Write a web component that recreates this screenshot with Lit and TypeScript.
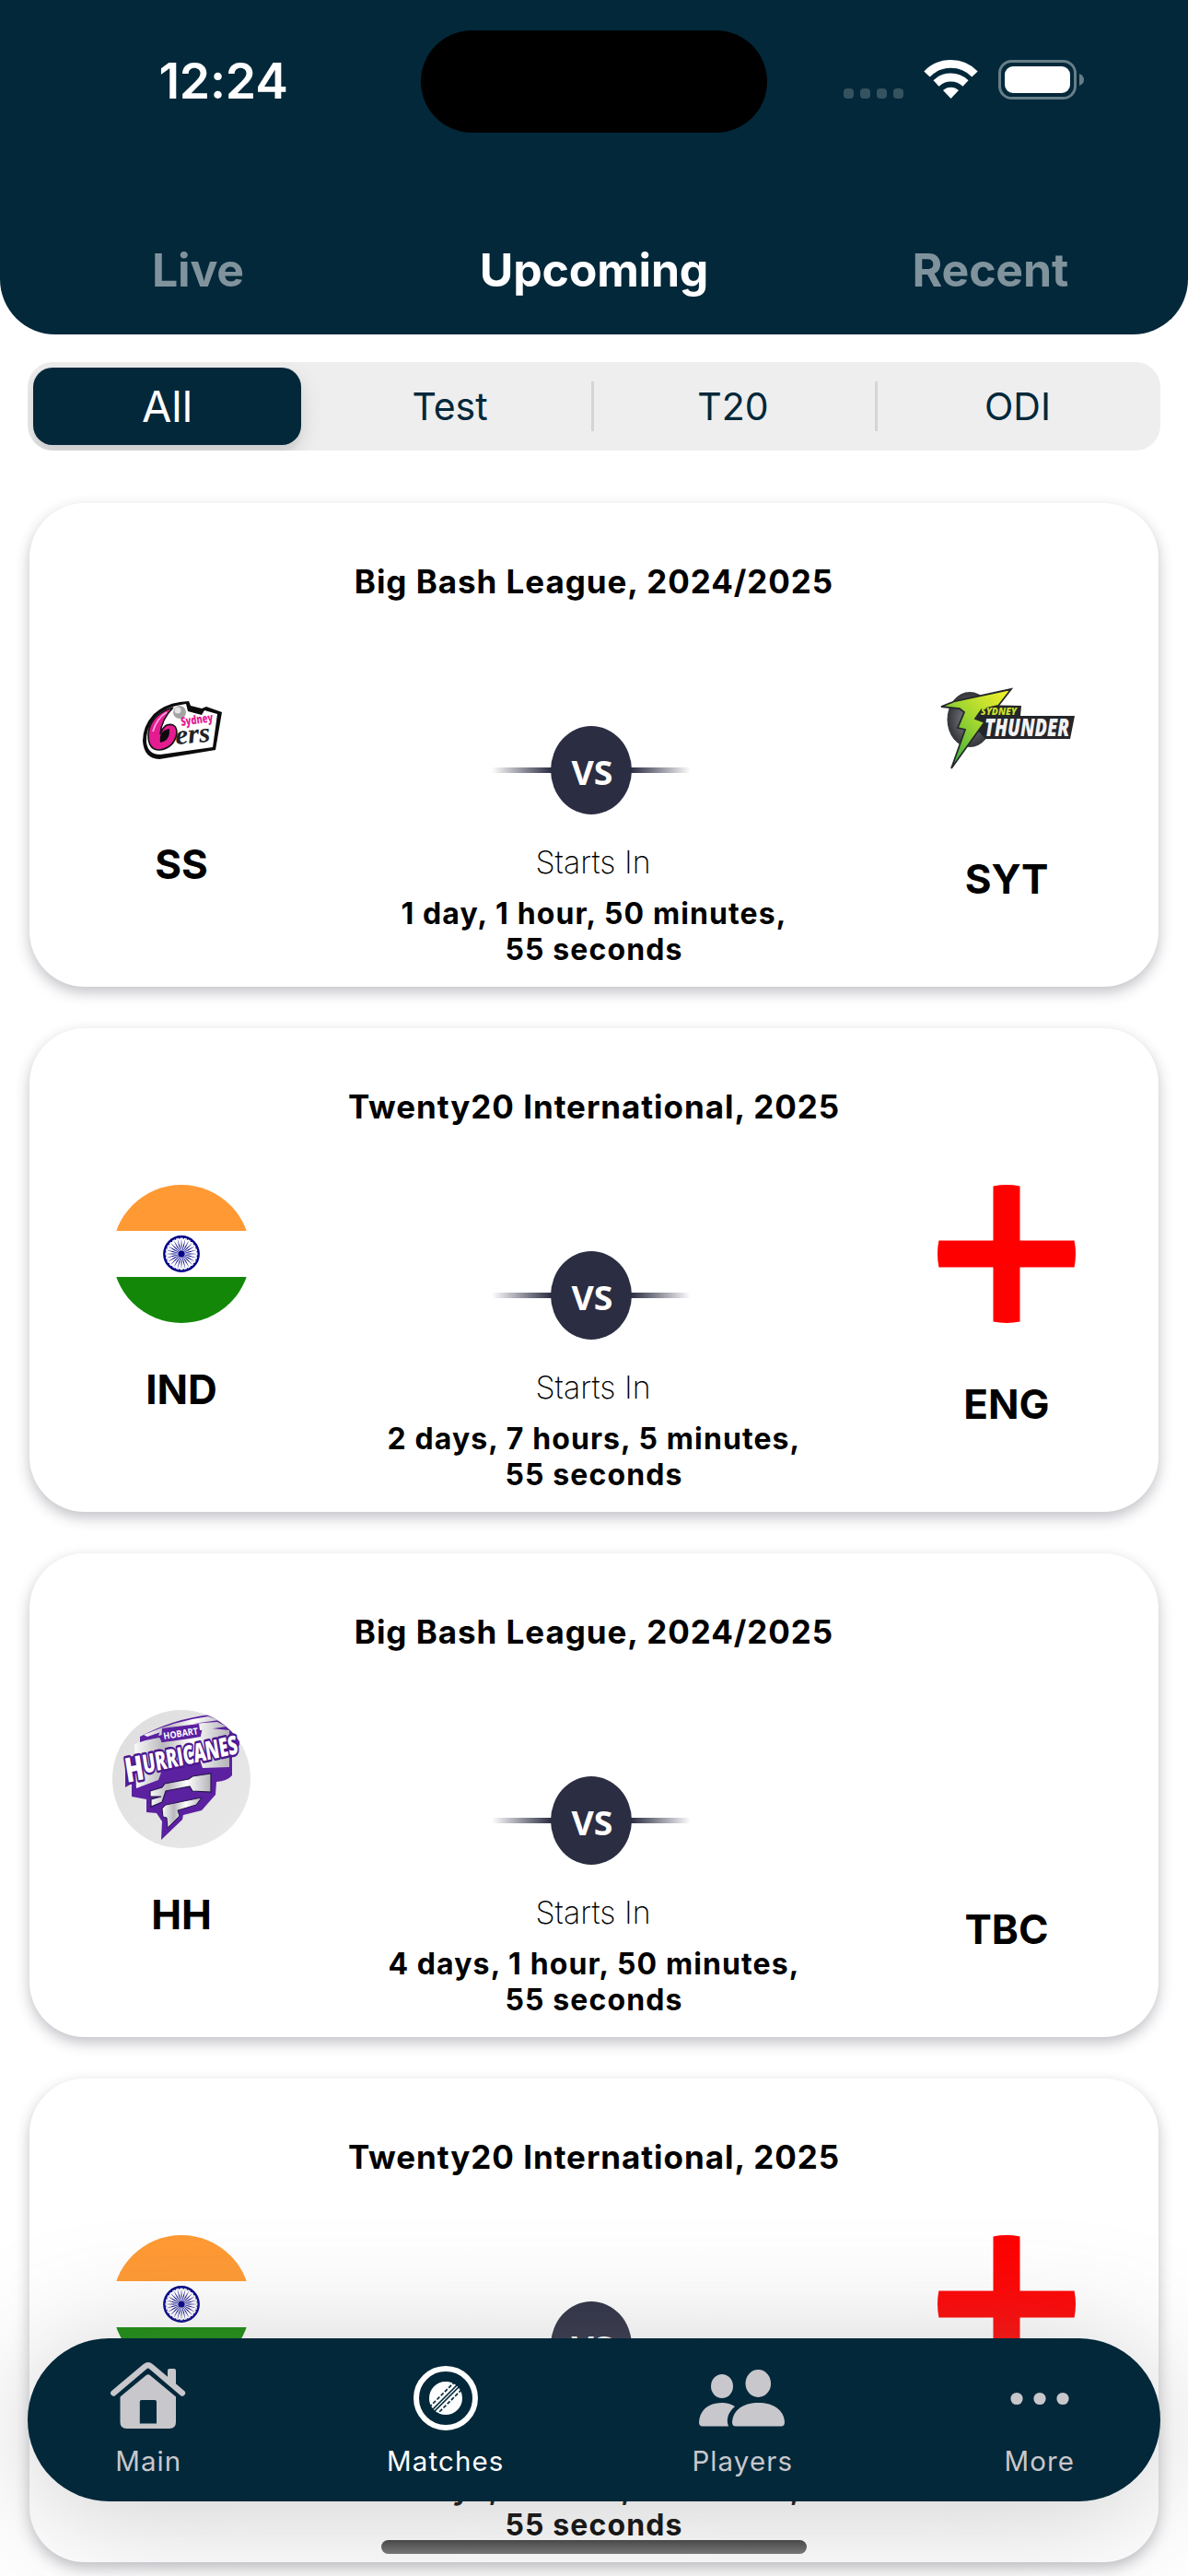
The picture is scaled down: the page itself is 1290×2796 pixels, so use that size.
import { LitElement, html, svg, css } from "lit";
import { customElement, property } from "lit/decorators.js";

type Match = { title: string; home: string; away: string; time: string; homeLogo: string; awayLogo: string };

const MATCHES: Match[] = [
  { title: "Big Bash League, 2024/2025", home: "SS", away: "SYT", time: "1 day, 1 hour, 50 minutes, 55 seconds", homeLogo: "sixers", awayLogo: "thunder" },
  { title: "Twenty20 International, 2025", home: "IND", away: "ENG", time: "2 days, 7 hours, 5 minutes, 55 seconds", homeLogo: "india", awayLogo: "england" },
  { title: "Big Bash League, 2024/2025", home: "HH", away: "TBC", time: "4 days, 1 hour, 50 minutes, 55 seconds", homeLogo: "hurricanes", awayLogo: "none" },
  { title: "Twenty20 International, 2025", home: "IND", away: "ENG", time: "5 days, 7 hours, 5 minutes, 55 seconds", homeLogo: "india", awayLogo: "england" },
];

const spokes = Array.from({ length: 24 }, (_, i) => i * 15);

const sixers = svg`
  <path d="M74 30 Q50 31 36 44 Q24 57 24 73 Q25 92 42 93 L103 83 L110 42 L93 36 L88 38 L76 35 Z" fill="#0b0b0d"/>
  <path d="M71 33 Q48 36 37 48 Q27 60 28 75 Q30 88 43 88 L100 80 L105 44 L91 40 L88 45 L73 41 Z" fill="#fff"/>
  <path d="M57 37 Q31 45 30 67 Q30 83 42 83 Q58 81 61 65 Q61 53 50 56 Q46 58 43 66 Q44 50 57 37Z" fill="#e51b92" stroke="#111" stroke-width="1.6"/>
  <path d="M53 60 Q41 62 43 75 Q54 73 53 60Z" fill="#0b0b0d"/>
  <path d="M35 63 Q39 49 50 42" stroke="#f9a6d6" stroke-width="1.8" fill="none"/>
  <circle cx="64" cy="42" r="7" fill="#a4a4a4"/><circle cx="62" cy="40" r="3.5" fill="#e4e4e4"/>
  <text x="66" y="57" font-size="13" font-weight="800" fill="#e51b92" textLength="35" lengthAdjust="spacingAndGlyphs" transform="rotate(-8 66 57)">Sydney</text>
  <text x="60" y="77" font-size="30" font-weight="700" font-style="italic" fill="#222" class="serif" textLength="38" lengthAdjust="spacingAndGlyphs" transform="rotate(-5 60 77)">ers</text>`;

const thunder = svg`
  <defs>
    <linearGradient id="bolt" x1="1" y1="0" x2="0" y2="1"><stop offset="0" stop-color="#fdf32b"/><stop offset=".45" stop-color="#a5d82f"/><stop offset="1" stop-color="#22a045"/></linearGradient>
    <radialGradient id="ball"><stop offset="0" stop-color="#8a8b90"/><stop offset="1" stop-color="#333439"/></radialGradient>
  </defs>
  <ellipse cx="53" cy="60" rx="24.500" ry="30" fill="url(#ball)"/>
  <path d="M61 44 L109 45 L108 56 L167 56 L162 81 L70 81 L60 70Z" fill="#24252a"/>
  <path d="M98 27 L37 40 L22 46 L42 48 L47 52 L40 69 L48 71 L33 113 L69 63 L59 59 L66 49 L84 45Z" fill="url(#bolt)" stroke="#25282a" stroke-width="1.8"/>
  <text x="65" y="55" font-size="11" font-weight="800" font-style="italic" fill="#c8e02a" textLength="39" lengthAdjust="spacingAndGlyphs">SYDNEY</text>
  <text x="69" y="78" font-size="26" font-weight="800" font-style="italic" fill="#f2f2f4" textLength="92" lengthAdjust="spacingAndGlyphs">THUNDER</text>`;

const india = svg`
  <defs><clipPath id="disc"><circle cx="75" cy="75" r="75"/></clipPath></defs>
  <g clip-path="url(#disc)">
    <rect width="150" height="150" fill="#fff"/>
    <rect width="150" height="50" fill="#ff9933"/>
    <rect y="100" width="150" height="50" fill="#138808"/>
  </g>
  <circle cx="75" cy="75" r="18.7" fill="#fff" stroke="#000088" stroke-width="2.4"/>
  ${spokes.map((a) => svg`<path d="M75 75 L74.5 66 L75 57.5 L75.5 66Z" fill="#000088" transform="rotate(${a} 75 75)"/><circle cx="75" cy="57.7" r=".8" fill="#000088" transform="rotate(${a + 7.5} 75 75)"/>`)}
  <circle cx="75" cy="75" r="3.5" fill="#000088"/>`;

const england = svg`
  <defs><clipPath id="disc"><circle cx="75" cy="75" r="75"/></clipPath></defs>
  <g clip-path="url(#disc)"><rect width="150" height="150" fill="#fff"/><path d="M60.5 0h29v60.5H150v29H89.500V150h-29V89.500H0v-29h60.500z" fill="#f00"/></g>`;

const hurricanes = svg`
  <defs>
    <linearGradient id="disk" x1="0" y1="0" x2="1" y2="1"><stop offset="0" stop-color="#dedede"/><stop offset="1" stop-color="#e9e9e9"/></linearGradient>
    <linearGradient id="silver"><stop offset="0" stop-color="#fafafa"/><stop offset=".3" stop-color="#b9b9bd"/><stop offset=".6" stop-color="#fff"/><stop offset="1" stop-color="#b4b4b8"/></linearGradient>
    <clipPath id="hc"><circle cx="75" cy="75" r="75"/></clipPath>
  </defs>
  <circle cx="75" cy="75" r="75" fill="url(#disk)"/>
  <g clip-path="url(#hc)">
    <path d="M30 29 Q65 10 106 5 L138 24 L138 38 L130 49 L130 71 Q125 77 113 78 L112 92 L97 109 L77 114 L76 119 L53 141 L54 121 L48 112 L37 111 L37 97 L21 94 L21 80 L14 84 L14 52 L30 48Z" fill="#5b21a0"/>
    <path d="M34 27 Q68 12 104 7 L116 11 Q72 16 38 29Z M52 23 Q84 14 114 13 L124 18 L96 22 Q70 22 50 28Z" fill="url(#silver)"/>
    <path d="M24 37 Q37 32 51 30 L54 35 Q75 30 96 28 L98 19 L127 22 L127 62 L98 63 L95 54 Q70 57 54 65 L50 76 L26 85Z" fill="url(#silver)"/>
    <path d="M54 20 L94 15 L96 29 Q73 33 53 35Z" fill="#5b21a0"/>
    <path d="M41 88 L54 84 L57 80 L83 75 L87 72 L107 69 L107 89 L87 88 L84 83 L58 88 L54 100 L42 105 L42 97 L53 94 L41 94Z" fill="url(#silver)" stroke="#27174c" stroke-width="1.2"/>
    <path d="M54 107 L58 103 L97 95 L91 103 L71 109 L73 115 L60 128 L59 117 L55 116Z" fill="url(#silver)" stroke="#27174c" stroke-width="1"/>
  </g>
  <text x="56" y="32" font-size="10" font-weight="700" fill="#fff" textLength="38" lengthAdjust="spacingAndGlyphs" transform="rotate(-9 56 32)">HOBART</text>
  <g transform="translate(16 79) rotate(-12) skewX(-3)" font-weight="800" fill="#fff" stroke="#4b178d" stroke-width="5" paint-order="stroke" stroke-linejoin="round">
    <text font-size="37" textLength="20" lengthAdjust="spacingAndGlyphs">H</text>
    <text x="20" y="-6" font-size="28" textLength="105" lengthAdjust="spacingAndGlyphs">URRICANES</text>
  </g>`;

// width, height, shift right, shift down, artwork
const logos: Record<string, [number, number, number, number, unknown]> = {
  sixers: [140, 120, 4, 0, sixers],
  thunder: [190, 130, 2, -5, thunder],
  india: [150, 150, 0, 0, india],
  england: [150, 150, 0, 0, england],
  hurricanes: [150, 150, 0, 0, hurricanes],
};

@customElement("team-logo")
class TeamLogo extends LitElement {
  @property() name = "";
  static styles = css`
    :host { display: flex; width: 190px; height: 150px; align-items: center; justify-content: center; }
    svg { display: block; flex: none; overflow: visible; font-family: "Open Sans", "Liberation Sans", sans-serif; }
    .serif { font-family: "Liberation Serif", serif; }
  `;
  render() {
    const l = logos[this.name];
    return l ? html`<svg width=${l[0]} height=${l[1]} viewBox="${-l[2]} ${-l[3]} ${l[0]} ${l[1]}">${l[4]}</svg>` : html``;
  }
}

@customElement("match-card")
class MatchCard extends LitElement {
  @property({ attribute: false }) match!: Match;
  static styles = css`
    :host { display: block; height: 525px; box-sizing: border-box; border-radius: 60px; background: #fff; padding-top: 63px; box-shadow: 0 6px 15px rgba(40, 42, 62, 0.29); color: #000; }
    .title { text-align: center; font-size: 35px; line-height: 44px; font-weight: 680; letter-spacing: 0.95px; }
    .body { display: grid; grid-template-columns: 330px 1fr 330px; }
    .team { display: flex; flex-direction: column; align-items: center; padding-top: 63px; }
    .code { font-size: 44px; line-height: 54px; font-weight: 660; margin-top: 45px; }
    .away .code { margin-top: 61px; }
    .mid { display: flex; flex-direction: column; align-items: center; padding-top: 134px; }
    .vs { display: block; margin-left: -7px; }
    .starts { font-size: 34px; line-height: 42px; font-weight: 200; margin-top: 30px; margin-left: -2px; }
    .time { font-size: 32px; line-height: 39px; font-weight: 680; letter-spacing: 1.1px; width: 464px; text-align: center; margin-top: 15px; }
  `;
  render() {
    const m = this.match;
    return html`
      <div class="title">${m.title}</div>
      <div class="body">
        <div class="team"><team-logo name=${m.homeLogo}></team-logo><div class="code">${m.home}</div></div>
        <div class="mid">
          <svg class="vs" width="216" height="98" viewBox="0 0 216 98">
            <defs><linearGradient id="fade"><stop offset="0" stop-color="#2b2d42" stop-opacity="0"/><stop offset=".3" stop-color="#2b2d42"/><stop offset=".7" stop-color="#2b2d42"/><stop offset="1" stop-color="#2b2d42" stop-opacity="0"/></linearGradient></defs>
            <rect x="0" y="46" width="216" height="6" fill="url(#fade)"/>
            <ellipse cx="108" cy="49" rx="44" ry="48" fill="#2b2d42"/>
            <text x="109" y="64.500" text-anchor="middle" font-family="Open Sans" font-weight="700" font-size="36" fill="#fff" textLength="45" lengthAdjust="spacingAndGlyphs">VS</text>
          </svg>
          <div class="starts">Starts In</div>
          <div class="time">${m.time}</div>
        </div>
        <div class="team away"><team-logo name=${m.awayLogo}></team-logo><div class="code">${m.away}</div></div>
      </div>`;
  }
}

@customElement("app-root")
class AppRoot extends LitElement {
  static styles = css`
    :host { display: block; position: relative; width: 1290px; height: 2796px; overflow: hidden; background: #fff; font-family: Inter, "Liberation Sans", sans-serif; }
    header { height: 363px; background: #02283a; border-radius: 0 0 60px 60px; color: #fff; }
    .status { display: grid; grid-template-columns: 457px 376px 457px; height: 144px; padding-top: 33px; box-sizing: border-box; }
    .clock { padding-left: 28px; text-align: center; font-size: 53.500px; line-height: 62px; font-weight: 600; padding-top: 24px; letter-spacing: -0.2px; }
    .island { background: #000; border-radius: 56px; }
    .sys { padding-left: 82px; padding-top: 30px; }
    .sys svg { display: block; }
    .tabs { display: grid; grid-template-columns: repeat(3, 430px); padding-top: 118px; text-align: center; font-size: 50px; line-height: 62px; font-weight: 650; letter-spacing: -0.2px; }
    .tab { color: #80939c; }
    .tab.on { color: #fff; }
    .tab:first-child { text-align: left; padding-left: 165px; }
    .tab:last-child { text-align: right; padding-right: 130px; }
    .seg { display: grid; grid-template-columns: 305px 307px 308px 310px; margin: 30px 30px 0; height: 96px; border-radius: 27px; background: #eee; overflow: hidden; color: #02283a; font-size: 41px; align-items: center; text-align: center; }
    .opt { height: 54px; line-height: 54px; border-left: 3px solid transparent; border-right: 3px solid transparent; box-sizing: border-box; }
    .opt.line { border-left-color: #d5d5d7; }
    .opt.on { height: 84px; line-height: 84px; margin: 0 8px 0 6px; border: 0; border-radius: 21px; background: #02283a; color: #fff; font-size: 47px; box-shadow: 0 9px 24px rgba(0, 0, 0, 0.12), 0 9px 3px rgba(0, 0, 0, 0.04); }
    .list { display: flex; flex-direction: column; gap: 45px; padding: 57px 32px 0; }
    nav { position: absolute; left: 30px; top: 2538px; width: 1230px; height: 177px; border-radius: 89px; background: #02283a; box-shadow: 0 12px 130px rgba(140, 140, 140, 0.44); }
    .items { display: grid; grid-template-columns: repeat(4, 322.5px); margin: 0 -30px; padding-top: 20px; }
    .item { display: flex; flex-direction: column; align-items: center; color: #c8c7cc; font-size: 29.500px; line-height: 36px; font-weight: 430; letter-spacing: 1.1px; }
    .item.on { color: #fff; }
    .item svg { display: block; margin-bottom: 5px; }
    .bar { position: absolute; left: 414px; top: 2757px; width: 462px; height: 15px; border-radius: 8px; background: linear-gradient(#484848, #777); }
  `;
  render() {
    return html`
      <header>
        <div class="status">
          <div class="clock">12:24</div>
          <div class="island"></div>
          <div class="sys">
            <svg width="270" height="50" viewBox="915 63 270 50">
              <g fill="#35535f"><rect x="916" y="96" width="11" height="11" rx="4"/><rect x="934" y="96" width="11" height="11" rx="4"/><rect x="952" y="96" width="11" height="11" rx="4"/><rect x="970" y="96" width="11" height="11" rx="4"/></g>
              <g fill="none" stroke="#fff" stroke-width="8.800">
                <path d="M1006.500 80.500 A36 36 0 0 1 1058.500 80.500"/>
                <path d="M1016.500 90.500 A23 23 0 0 1 1048.500 90.500"/>
              </g>
              <path d="M1024 98 A12.500 12.500 0 0 1 1041 98 L1032.500 107Z" fill="#fff"/>
              <rect x="1085.500" y="66.500" width="82" height="40" rx="13" fill="none" stroke="#677e88" stroke-width="3"/>
              <rect x="1091" y="72" width="71" height="29" rx="9" fill="#fff"/>
              <path d="M1172 80 Q1177 82 1177 86.500 Q1177 91 1172 93Z" fill="#677e88"/>
            </svg>
          </div>
        </div>
        <div class="tabs"><div class="tab">Live</div><div class="tab on">Upcoming</div><div class="tab">Recent</div></div>
      </header>
      <div class="seg"><div class="opt on">All</div><div class="opt">Test</div><div class="opt line">T20</div><div class="opt line">ODI</div></div>
      <div class="list">${MATCHES.map((m) => html`<match-card .match=${m}></match-card>`)}</div>
      <nav>
        <div class="items">
          <div class="item">
            <svg width="96" height="90" viewBox="113 2558 96 90" fill="currentColor">
              <path d="M123.300 2597.500 L157.500 2568.600 Q160.800 2566 164 2568.600 L198 2597.500" fill="none" stroke="currentColor" stroke-width="6.300" stroke-linecap="round" stroke-linejoin="round"/>
              <path d="M182 2583 V2573 Q182 2571 184 2571 H189 Q191 2571 191 2573 V2592Z"/>
              <path fill-rule="evenodd" d="M158.800 2578 Q160.800 2576.300 162.800 2578 L191 2601.500 V2629 Q191 2636 184 2636 H137.500 Q130.500 2636 130.500 2629 V2601.500Z M153.500 2605 Q151.800 2605 151.800 2607 V2630.500 H170 V2607 Q170 2605 168 2605Z"/>
            </svg><span>Main</span>
          </div>
          <div class="item on">
            <svg width="96" height="90" viewBox="436 2558 96 90">
              <circle cx="484" cy="2603" r="32" fill="none" stroke="#fff" stroke-width="6"/>
              <circle cx="484" cy="2603" r="18" fill="#fff"/>
              <g stroke="#02283a" stroke-width="1.700"><path d="M467 2618 L500 2585 M470 2619 L503 2586"/><path d="M466 2613 L496 2583 M473 2622 L505 2590" stroke-dasharray="4 2"/></g>
            </svg><span>Matches</span>
          </div>
          <div class="item">
            <svg width="96" height="90" viewBox="758 2558 96 90" fill="currentColor">
              <ellipse cx="784" cy="2590" rx="12" ry="13"/><ellipse cx="823.300" cy="2587" rx="13.800" ry="15"/>
              <path d="M763 2633.500 Q759 2633.500 759 2629 C760 2615 770 2608 784 2608 Q792 2608 798 2612 C791 2618 788 2626 791 2633.500Z"/>
              <path d="M799 2633.500 Q795 2633.500 795 2629 C796 2615 808 2608 823.500 2608 C839 2608 851 2615 852 2629 Q852 2633.500 848 2633.500Z"/>
            </svg><span>Players</span>
          </div>
          <div class="item">
            <svg width="96" height="90" viewBox="1080.500 2558 96 90" fill="currentColor"><circle cx="1103.500" cy="2603.500" r="6.600"/><circle cx="1128.500" cy="2603.500" r="6.600"/><circle cx="1153.500" cy="2603.500" r="6.600"/></svg><span>More</span>
          </div>
        </div>
      </nav>
      <div class="bar"></div>`;
  }
}
